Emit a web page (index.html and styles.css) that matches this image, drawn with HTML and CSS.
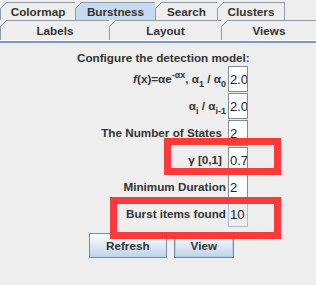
FILE: index.html
```html
<!DOCTYPE html>
<html lang="en">
<head>
    <meta charset="UTF-8">
    <title>Burstness</title>
    <link rel="stylesheet" href="styles.css">
</head>
<body>
    <!-- Tabs -->
    <div class="tabs">
        <div class="tab-row">
            <div class="tab tab-colormap">Colormap</div>
            <div class="tab tab-burstness selected">Burstness</div>
            <div class="tab tab-search">Search</div>
            <div class="tab tab-clusters">Clusters</div>
        </div>
        <div class="tab-row">
            <div class="tab tab-labels">Labels</div>
            <div class="tab tab-layout">Layout</div>
            <div class="tab tab-views">Views</div>
        </div>
    </div>
    <div class="tab-divider"></div>

    <!-- Burstness panel -->
    <div class="panel">
        <div class="form">
            <div class="heading">Configure the detection model:</div>

            <div class="label"><i>f</i>(x)=αe<sup>-αx</sup>, α<sub>1</sub> / α<sub>0</sub></div>
            <input class="field" type="text" value="2.0">

            <div class="label">α<sub>i</sub> / α<sub>i-1</sub></div>
            <input class="field" type="text" value="2.0">

            <div class="label spaced">The Number of States</div>
            <input class="field" type="text" value="2">

            <div class="label spaced">γ [0,1]</div>
            <input class="field" type="text" value="0.7">

            <div class="label">Minimum Duration</div>
            <input class="field" type="text" value="2">

            <div class="label">Burst items found</div>
            <input class="field readonly" type="text" value="10" readonly>
        </div>

        <div class="buttons">
            <button class="btn">Refresh</button>
            <button class="btn focused">View</button>
        </div>
    </div>

    <!-- Annotation boxes -->
    <div class="highlight highlight-gamma"></div>
    <div class="highlight highlight-found"></div>
</body>
</html>
```

FILE: styles.css
```css
* {
    margin: 0;
    padding: 0;
    box-sizing: border-box;
}

body {
    font-family: "Liberation Sans", Arial, sans-serif;
    font-size: 11.7px;
    color: #333333;
    background: #eeeeee;
    width: 316px;
    height: 285px;
    overflow: hidden;
    position: relative;
}

/* Tabs */
.tabs {
    padding-top: 2px;
}

.tab-row {
    display: flex;
}

.tab-row + .tab-row .tab {
    height: 20px;
}

.tab {
    position: relative;
    height: 18px;
    margin-right: -1px;
    border: 1px solid #8d9aa9;
    border-bottom: none;
    background: #eeeeee;
    font-weight: bold;
    display: flex;
    align-items: center;
    justify-content: center;
}

.tab::before {
    content: "";
    position: absolute;
    top: -1px;
    left: -1px;
    width: 7px;
    height: 7px;
    background: linear-gradient(to bottom right, #eeeeee 0 calc(50% - 0.6px), #8d9aa9 calc(50% - 0.6px) calc(50% + 0.6px), transparent calc(50% + 0.6px));
}

.tab.selected {
    background: #c8daef;
}

.tab-colormap { width: 76px; }
.tab-burstness { width: 81px; }
.tab-search { width: 63px; }
.tab-clusters { width: 68px; }

.tab-labels { width: 110px; }
.tab-layout { width: 113px; }
.tab-views { width: 96px; }

.tab-divider {
    height: 3px;
    border-top: 1px solid #fbfbfb;
    background: #7d9ac6;
}

/* Form */
.panel {
    padding-top: 8px;
}

.form {
    display: grid;
    grid-template-columns: 1fr 20px;
    grid-template-rows: 14px;
    grid-auto-rows: 26px;
    row-gap: 1px;
    width: 171px;
    margin-left: 77px;
    font-weight: bold;
}

.heading {
    grid-column: 1 / -1;
    text-align: right;
    line-height: 14px;
    white-space: nowrap;
}

.label {
    align-self: center;
    text-align: right;
    white-space: nowrap;
    padding-right: 2px;
    line-height: 14px;
}

.label.spaced {
    padding-right: 6px;
}

.label sup,
.label sub {
    font-size: 9px;
    line-height: 0;
}

.label sup {
    vertical-align: 5px;
}

.label sub {
    vertical-align: -4px;
}

.field {
    width: 20px;
    height: 26px;
    border: 1px solid #7f8b98;
    background: #ffffff;
    font-family: "Liberation Sans", Arial, sans-serif;
    font-size: 13px;
    color: #222233;
    padding: 0 0 0 1px;
    outline: none;
}

.field.readonly {
    background: transparent;
    border-color: #a9c0dc;
}

/* Buttons */
.buttons {
    display: flex;
    justify-content: center;
    gap: 7px;
    width: 171px;
    margin: 6px 0 0 76px;
}

.btn {
    height: 25px;
    padding: 0 16px;
    border: 1px solid #7a8ca2;
    background: linear-gradient(#fdfeff 0%, #e2ebf5 45%, #bfd3ea 100%);
    font-family: "Liberation Sans", Arial, sans-serif;
    font-size: 11.7px;
    font-weight: bold;
    color: #333333;
}

.btn.focused {
    box-shadow: inset 0 0 0 1px #b3c9e2;
}

/* Red annotation boxes */
.highlight {
    position: absolute;
    border: 7px solid #fb3a3a;
}

.highlight-gamma {
    left: 164px;
    top: 138px;
    width: 117px;
    height: 37px;
}

.highlight-found {
    left: 110px;
    top: 197px;
    width: 171px;
    height: 42px;
}
```
